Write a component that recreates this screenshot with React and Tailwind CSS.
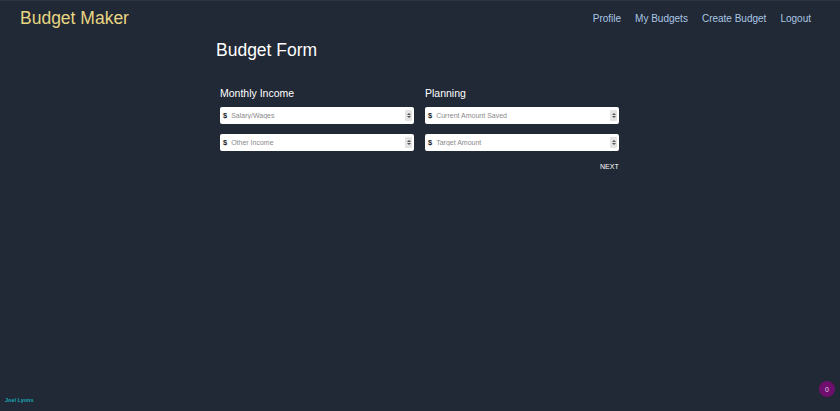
import React from "react";

function Spinner() {
    return (
        <div className="flex flex-col items-center justify-center w-[7px] h-[11px] bg-[#e4e4e4] rounded-[1px] gap-[1px]">
            <div className="w-0 h-0 border-l-[2px] border-r-[2px] border-b-[2px] border-l-transparent border-r-transparent border-b-[#555]" />
            <div className="w-0 h-0 border-l-[2px] border-r-[2px] border-t-[2px] border-l-transparent border-r-transparent border-t-[#555]" />
        </div>
    );
}

function MoneyInput({ placeholder }) {
    return (
        <div className="flex items-center h-[17px] bg-white rounded-[2px] pl-[3px] pr-[2px]">
            <span className="text-[7.5px] font-bold text-[#222] leading-none">$</span>
            <input
                type="text"
                placeholder={placeholder}
                className="flex-1 min-w-0 ml-[4px] text-[7px] leading-none text-[#333] placeholder:text-[#8a8a8a] bg-transparent outline-none"
            />
            <Spinner />
        </div>
    );
}

export default function App() {
    const links = ["Profile", "My Budgets", "Create Budget", "Logout"];

    return (
        <div className="relative min-h-screen flex flex-col bg-[#212836] font-['Liberation_Sans',Arial,sans-serif] border-t border-[#2c3442]">
            <nav className="flex items-center justify-between h-[36px] pl-[20px] pr-[29px]">
                <a className="text-[17.5px] text-[#e8d682] leading-none">Budget Maker</a>
                <div className="flex items-center gap-[14px]">
                    {links.map((link) => (
                        <a key={link} className="text-[10px] text-[#a9c7e3] leading-none">{link}</a>
                    ))}
                </div>
            </nav>

            <main className="flex-1 w-[404px] ml-[216px]">
                <h1 className="text-[17.5px] text-white leading-none mt-[5px]">Budget Form</h1>

                <div className="grid grid-cols-2 gap-x-[11px] ml-[4px] mt-[28px] w-[399px]">
                    <div className="flex flex-col">
                        <h2 className="text-[10.5px] text-white leading-none mb-[9px]">Monthly Income</h2>
                        <div className="flex flex-col gap-[10px]">
                            <MoneyInput placeholder="Salary/Wages" />
                            <MoneyInput placeholder="Other Income" />
                        </div>
                    </div>
                    <div className="flex flex-col">
                        <h2 className="text-[10.5px] text-white leading-none mb-[9px]">Planning</h2>
                        <div className="flex flex-col gap-[10px]">
                            <MoneyInput placeholder="Current Amount Saved" />
                            <MoneyInput placeholder="Target Amount" />
                        </div>
                    </div>
                </div>

                <div className="flex justify-end w-[403px] mt-[12px]">
                    <button className="text-[7px] text-white tracking-[0.1px] leading-none">NEXT</button>
                </div>
            </main>

            <footer className="flex items-end px-[5px] pb-[8px]">
                <span className="text-[5.5px] font-bold text-[#1ca9b6] leading-none">Joel Lyons</span>
            </footer>

            <div className="absolute bottom-[14px] right-[5px] flex items-center justify-center w-[16px] h-[16px] rounded-full bg-[#6e0f6e]">
                <span className="text-[7px] text-[#e6d0e6] leading-none">0</span>
            </div>
        </div>
    );
}
